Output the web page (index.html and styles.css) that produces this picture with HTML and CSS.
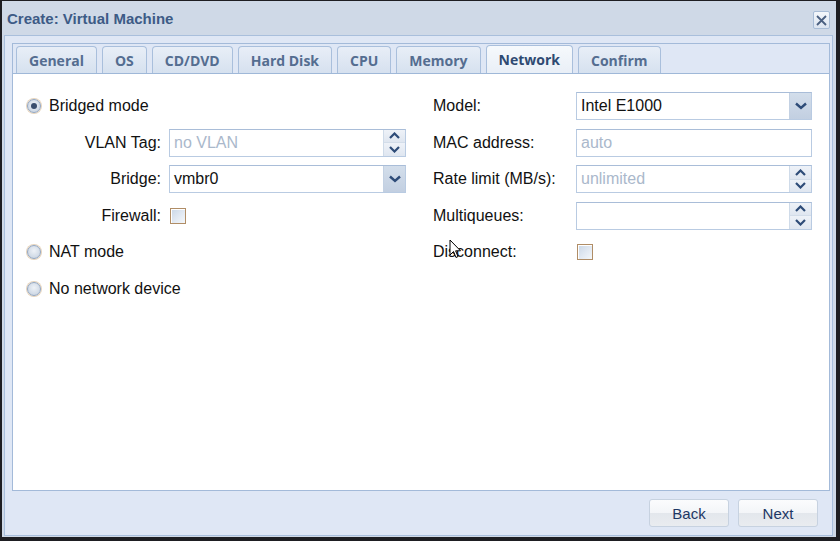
FILE: index.html
```html
<!DOCTYPE html>
<html>
<head>
<meta charset="utf-8">
<link rel="stylesheet" href="styles.css">
</head>
<body>
<div class="win">
  <div class="header">
    <span class="title">Create: Virtual Machine</span>
    <span class="close"><svg width="11" height="11" viewBox="0 0 11 11"><path d="M1 1L10 10M10 1L1 10" stroke="#4a5f80" stroke-width="1.8" fill="none"/></svg></span>
  </div>
  <div class="frame">
    <div class="panel">
      <div class="tabbar">
        <div class="tab">General</div>
        <div class="tab">OS</div>
        <div class="tab">CD/DVD</div>
        <div class="tab">Hard Disk</div>
        <div class="tab">CPU</div>
        <div class="tab">Memory</div>
        <div class="tab active">Network</div>
        <div class="tab">Confirm</div>
      </div>
      <div class="content">
        <div class="col left">
          <div class="row"><span class="radio checked"></span><span class="rlabel">Bridged mode</span></div>
          <div class="row"><span class="label">VLAN Tag:</span>
            <div class="field"><span class="ph">no VLAN</span><span class="spin"><span class="up"><svg width="11" height="7" viewBox="0 0 11 7"><path d="M1 6L5.5 1.5L10 6" stroke="#2e4c78" stroke-width="2.2" fill="none"/></svg></span><span class="dn"><svg width="11" height="7" viewBox="0 0 11 7"><path d="M1 1L5.5 5.5L10 1" stroke="#2e4c78" stroke-width="2.2" fill="none"/></svg></span></span></div>
          </div>
          <div class="row"><span class="label">Bridge:</span>
            <div class="field"><span class="val">vmbr0</span><span class="trig"><svg width="12" height="8" viewBox="0 0 12 8"><path d="M1 1.5L6 6L11 1.5" stroke="#2e4c78" stroke-width="2.4" fill="none"/></svg></span></div>
          </div>
          <div class="row"><span class="label">Firewall:</span><span class="check"></span></div>
          <div class="row"><span class="radio"></span><span class="rlabel">NAT mode</span></div>
          <div class="row"><span class="radio"></span><span class="rlabel">No network device</span></div>
        </div>
        <div class="col right">
          <div class="row"><span class="label">Model:</span>
            <div class="field"><span class="val">Intel E1000</span><span class="trig"><svg width="12" height="8" viewBox="0 0 12 8"><path d="M1 1.5L6 6L11 1.5" stroke="#2e4c78" stroke-width="2.4" fill="none"/></svg></span></div>
          </div>
          <div class="row"><span class="label">MAC address:</span>
            <div class="field"><span class="ph">auto</span></div>
          </div>
          <div class="row"><span class="label">Rate limit (MB/s):</span>
            <div class="field"><span class="ph">unlimited</span><span class="spin"><span class="up"><svg width="11" height="7" viewBox="0 0 11 7"><path d="M1 6L5.5 1.5L10 6" stroke="#2e4c78" stroke-width="2.2" fill="none"/></svg></span><span class="dn"><svg width="11" height="7" viewBox="0 0 11 7"><path d="M1 1L5.5 5.5L10 1" stroke="#2e4c78" stroke-width="2.2" fill="none"/></svg></span></span></div>
          </div>
          <div class="row"><span class="label">Multiqueues:</span>
            <div class="field"><span class="ph"></span><span class="spin"><span class="up"><svg width="11" height="7" viewBox="0 0 11 7"><path d="M1 6L5.5 1.5L10 6" stroke="#2e4c78" stroke-width="2.2" fill="none"/></svg></span><span class="dn"><svg width="11" height="7" viewBox="0 0 11 7"><path d="M1 1L5.5 5.5L10 1" stroke="#2e4c78" stroke-width="2.2" fill="none"/></svg></span></span></div>
          </div>
          <div class="row"><span class="label">Disconnect:</span><span class="check"></span></div>
        </div>
        <svg class="cursor" width="13" height="20" viewBox="0 0 13 20"><path d="M1 1L1 16L4.5 12.5L7 18.5L9 17.5L6.6 11.8L11.5 11.8Z" fill="#fff" stroke="#000" stroke-width="1"/></svg>
      </div>
    </div>
    <div class="footer">
      <button class="btn">Back</button>
      <button class="btn">Next</button>
    </div>
  </div>
</div>
</body>
</html>
```
FILE: styles.css
```css
html, body { margin: 0; padding: 0; }
body {
  background: #1e1e22;
  width: 840px;
  height: 541px;
  overflow: hidden;
  font-family: "Liberation Sans", Arial, sans-serif;
}
.win {
  margin: 1px 0 0 2px;
  width: 834px;
  height: 536px;
  background: #cfd9e7;
  display: flex;
  flex-direction: column;
}
.header {
  height: 34px;
  flex: none;
  display: flex;
  align-items: center;
  justify-content: space-between;
  padding: 0 6px 0 5px;
}
.title {
  font-weight: bold;
  font-size: 15px;
  color: #3d5b86;
}
.close {
  width: 15px;
  height: 16px;
  border: 1px solid #a8bcd6;
  border-radius: 2px;
  background: linear-gradient(#f4f7fb, #dbe4f0);
  display: flex;
  align-items: center;
  justify-content: center;
  margin-top: 4px;
}
.frame {
  flex: 1;
  margin: 0 3px 1px 2px;
  border: 1px solid #a9bfdc;
  background: #dfe7f5;
  padding: 7px 2px 0 7px;
  display: flex;
  flex-direction: column;
}
.panel {
  height: 448px;
  box-sizing: border-box;
  border: 1px solid #a3bad9;
  background: #fff;
  display: flex;
  flex-direction: column;
}
.tabbar {
  height: 29px;
  flex: none;
  background: #dfe7f5;
  border-bottom: 1px solid #9fb8d8;
  display: flex;
  align-items: flex-end;
  padding-left: 3px;
  gap: 5px;
}
.tab {
  height: 27px;
  box-sizing: border-box;
  padding: 0 12px;
  border: 1px solid #a9bfdc;
  border-bottom: none;
  border-radius: 4px 4px 0 0;
  background: linear-gradient(#e8eef7, #d6e1ef);
  font-family: "Open Sans", "DejaVu Sans", sans-serif;
  font-weight: bold;
  font-size: 14px;
  color: #546d90;
  display: flex;
  align-items: center;
}
.tab.active {
  height: 28px;
  background: linear-gradient(#f6f9fc, #e9eff7);
  color: #2f4a72;
}
.content {
  flex: 1;
  position: relative;
  display: flex;
  padding: 18px 0 0 12px;
  gap: 27px;
}
.col {
  display: flex;
  flex-direction: column;
  gap: 8.5px;
}
.left { width: 381px; }
.right { width: 379px; }
.row {
  height: 28px;
  display: flex;
  align-items: center;
  font-size: 16px;
  color: #111;
}
.left .label {
  width: 136px;
  text-align: right;
  margin-right: 8px;
}
.right .label {
  width: 143px;
}
.left .field { width: 237px; }
.right .field { width: 236px; }
.field {
  height: 28px;
  box-sizing: border-box;
  border: 1px solid #b9cbe2;
  border-top-color: #a9bdd8;
  background: #fff;
  display: flex;
  align-items: center;
  font-size: 16px;
}
.val, .ph {
  flex: 1;
  padding-left: 4px;
}
.val { color: #111; }
.ph { color: #aab8cb; }
.trig {
  width: 21px;
  height: 100%;
  border-left: 1px solid #c3d1e3;
  background: linear-gradient(#d3deeb, #c2cfe1);
  display: flex;
  align-items: center;
  justify-content: center;
}
.spin {
  width: 21px;
  height: 100%;
  border-left: 1px solid #cfdbe9;
  display: flex;
  flex-direction: column;
}
.spin .up, .spin .dn {
  flex: 1;
  display: flex;
  align-items: center;
  justify-content: center;
  background: linear-gradient(#eef2f8, #dfe6f0);
}
.spin .up { border-bottom: 1px solid #d3dde9; }
.radio {
  width: 12px;
  height: 12px;
  border-radius: 50%;
  border: 1px solid #93a6c0;
  background: radial-gradient(circle at 50% 40%, #eef2f7 0%, #c3cfde 100%);
  box-shadow: 0 0 0 1px #e6d4bd;
  margin-left: 2px;
  margin-right: 8px;
  position: relative;
}
.radio.checked::after {
  content: "";
  position: absolute;
  left: 3px;
  top: 3px;
  width: 6px;
  height: 6px;
  border-radius: 50%;
  background: #3a4e6e;
}
.rlabel { color: #111; }
.check {
  width: 14px;
  height: 14px;
  border: 1px solid #b08d66;
  background: linear-gradient(135deg, #c9d6e6 0%, #e2e9f2 55%, #f4f7fa 100%);
  box-shadow: inset 1px 1px 0 #fff;
  margin-left: 1px;
}
.cursor {
  position: absolute;
  left: 436px;
  top: 165px;
}
.footer {
  flex: 1;
  display: flex;
  justify-content: flex-end;
  align-items: flex-start;
  padding: 8px 12px 0 0;
  gap: 9px;
}
.btn {
  width: 80px;
  height: 28px;
  border: 1px solid #c7d2e0;
  border-radius: 3px;
  background: linear-gradient(#fbfcfd 0%, #f3f5f8 50%, #e3e7ec 51%, #e9ecf0 100%);
  font-family: "Liberation Sans", Arial, sans-serif;
  font-size: 15px;
  color: #1d3764;
  padding: 0;
}
```
